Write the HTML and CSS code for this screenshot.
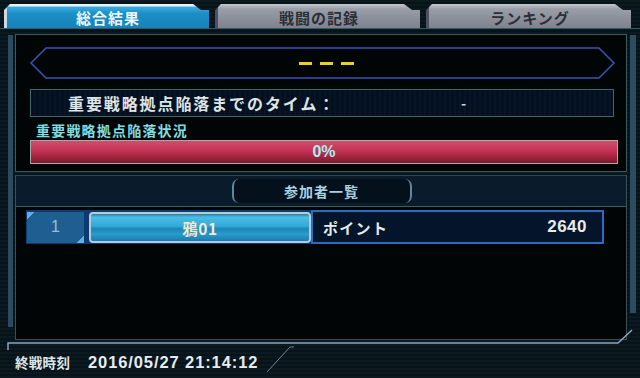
FILE: index.html
```html
<!DOCTYPE html>
<html lang="ja">
<head>
<meta charset="utf-8">
<link rel="stylesheet" href="styles.css">
</head>
<body>
<div class="screen">
  <div class="tabs">
    <div class="tab active"><span>総合結果</span></div>
    <div class="tab"><span>戦闘の記録</span></div>
    <div class="tab"><span>ランキング</span></div>
  </div>
  <div class="topline"></div>
  <div class="frame">
    <div class="rail left"><div class="bar"></div></div>
    <div class="content">
      <div class="panel upper">
        <div class="banner">
          <svg class="hex" viewBox="0 0 584 32" preserveAspectRatio="none"><polygon points="16,1 568,1 583,16 568,31 16,31 1,16" fill="none" stroke="#3556b8" stroke-width="1.5" vector-effect="non-scaling-stroke"/></svg>
          <div class="dashes"><i></i><i></i><i></i></div>
        </div>
        <div class="timerow">
          <span class="tlabel">重要戦略拠点陥落までのタイム：</span>
          <span class="tval">-</span>
        </div>
        <div class="statlabel">重要戦略拠点陥落状況</div>
        <div class="progress">0%</div>
      </div>
      <div class="panel lower">
        <div class="listhead">
          <div class="bracket">参加者一覧</div>
        </div>
        <div class="row">
          <div class="num">1</div>
          <div class="name"><span>鴉01</span></div>
          <div class="points">
            <span>ポイント</span>
            <span class="pv">2640</span>
          </div>
        </div>
      </div>
    </div>
    <div class="rail right"><div class="bar"></div></div>
  </div>
  <div class="footer">
    <svg class="fline" viewBox="0 0 640 30" preserveAspectRatio="none">
      <polyline points="8,10 8,3 618,3 632,-10" fill="none" stroke="#8fa4bf" stroke-width="1.5"/>
      <polyline points="267,32 290,7 294,7" fill="none" stroke="#6f8496" stroke-width="1"/>
    </svg>
    <span class="flabel">終戦時刻</span>
    <span class="ftime">2016/05/27 21:14:12</span>
  </div>
</div>
</body>
</html>
```
FILE: styles.css
```css
* { box-sizing: border-box; }
html, body { margin: 0; padding: 0; }
body {
  width: 640px; height: 378px; overflow: hidden;
  background: #08161c;
  font-family: "Noto Sans CJK JP", "Liberation Sans", sans-serif;
}
.screen {
  width: 640px; height: 378px;
  background: repeating-linear-gradient(to bottom, #0a1a20 0, #0a1a20 2px, #071319 2px, #071319 4px);
  display: flex; flex-direction: column;
}
.tabs {
  display: flex; gap: 6px; padding: 4px 0 0 4px; height: 28px;
}
.tab {
  width: 205px; height: 24px;
  background: linear-gradient(to bottom, #c4c8d0 0, #9a9ea8 20%, #7e828c 100%);
  clip-path: polygon(6px 0, 189px 0, 197px 6px, 205px 6px, 205px 24px, 0 24px, 0 6px);
  display: flex; align-items: center; justify-content: center;
  border-left: 3px solid #4c5060;
}
.tab span {
  font-size: 15px; font-weight: 700; color: #2b2f38; letter-spacing: 1px;
  margin-top: 2px;
}
.tab.active {
  background: linear-gradient(to bottom, #e8f4f8 0, #e8f4f8 2px, #3aaee0 3px, #1c8ec6 40%, #1682ba 100%);
  border-left: 3px solid #cfd8dc;
}
.tab.active span { color: #ecf6fb; }
.topline { height: 1px; background: #2f5b66; margin: 0 0 5px 0; }
.frame { display: flex; height: 306px; }
.rail { width: 15px; position: relative; }
.rail.left .bar {
  margin: 1px 0 0 8px; width: 5px; height: 292px; background: #2a4a60;
}
.rail.right { width: 13px; }
.rail.right .bar {
  margin: 1px 0 0 3px; width: 6px; height: 278px; background: #2c4c62;
}
.content { width: 612px; display: flex; flex-direction: column; gap: 3px; }
.panel.upper {
  height: 138px;
  border: 1px solid #3c5a5c;
  background: #020506;
  padding: 12px 10px 0 14px;
  display: flex; flex-direction: column;
}
.banner {
  position: relative; height: 32px; width: 585px;
  display: flex; align-items: center; justify-content: center;
}
.hex { position: absolute; inset: 0; width: 100%; height: 100%; }
.dashes { display: flex; gap: 8px; margin-left: 8px; }
.dashes i { display: block; width: 13px; height: 3px; background: #e6d12a; }
.timerow {
  margin-top: 10px; height: 28px; width: 584px;
  border: 1px solid #3d6a68;
  background: repeating-linear-gradient(to right, #04101e 0, #04101e 3px, #061428 3px, #061428 5px);
  display: flex; align-items: center; padding-left: 37px;
}
.tlabel { font-size: 16px; font-weight: 700; color: #dfe4e6; letter-spacing: 1.9px; width: 393px; }
.tval { font-size: 14px; font-weight: 700; color: #d0d4d6; }
.statlabel {
  margin-top: 5px; padding-left: 6px;
  font-size: 14px; font-weight: 700; color: #7fdde0; letter-spacing: 1.2px; line-height: 16px;
}
.progress {
  margin-top: 2px; height: 24px; width: 588px;
  border: 1px solid #a9aaa8;
  background: linear-gradient(to bottom, #d34c6c 0, #c23356 45%, #a6243f 70%, #7a1a30 100%);
  display: flex; align-items: center; justify-content: center;
  font-family: "Liberation Sans", sans-serif; font-weight: 700; font-size: 16px; color: #a8eef2;
}
.panel.lower {
  flex: 1;
  border-left: 1px solid #3c4f52; border-right: 1px solid #3c4f52; border-bottom: 1px solid #3c4a48;
  background: #020506;
  display: flex; flex-direction: column;
}
.listhead {
  height: 32px; background: #0a1c2b;
  border-top: 1px solid #2c4a54; border-bottom: 1px solid #3c5e62;
  display: flex; align-items: center; justify-content: center;
}
.bracket {
  width: 180px; height: 24px; margin-left: 1px;
  border-left: 2px solid #5a8a9c; border-right: 2px solid #5a8a9c;
  border-radius: 7px;
  background: #04111c;
  display: flex; align-items: center; justify-content: center;
  font-size: 14px; font-weight: 700; color: #a8d2e2; letter-spacing: 1px;
}
.row {
  margin: 3px 0 0 10px; display: flex; height: 34px; width: 578px;
  background: #0d3a70; align-items: center;
}
.num {
  width: 57px; height: 31px; margin-left: 1px;
  background: linear-gradient(135deg, #5fb0e0 0, #5fb0e0 5px, #1e5e90 5px, #1e5e90 calc(100% - 5px), #5fb0e0 calc(100% - 5px));
  display: flex; align-items: center; justify-content: center;
  font-family: "Liberation Sans", sans-serif; font-size: 16px; color: #94c0de;
}
.name {
  width: 222px; height: 31px; margin-left: 5px;
  border: 2px solid #b4ccd6; border-radius: 4px;
  background: linear-gradient(to bottom, #2c7fa8 0, #49bde4 12%, #33a9d8 45%, #1e85b8 55%, #2a9ccc 75%, #1a7aae 100%);
  display: flex; align-items: center; justify-content: center;
}
.name span { font-size: 15.5px; font-weight: 700; color: #f2ead0; margin-top: 1px; letter-spacing: 0.5px; }
.points {
  flex: 1; height: 34px;
  border: 2px solid #2a6cc4;
  background: #04142a;
  display: flex; align-items: center; justify-content: space-between;
  padding: 0 15px 0 10px;
  font-size: 15px; font-weight: 700; color: #e6ecee; letter-spacing: 1.3px;
}
.pv { font-family: "Liberation Sans", sans-serif; font-size: 17px; letter-spacing: 0.5px; }
.footer {
  position: relative; flex: 1;
  display: flex; align-items: center; padding: 6px 0 0 15px;
}
.fline { position: absolute; left: 0; top: 0; width: 640px; height: 30px; overflow: visible; }
.flabel { font-size: 13.5px; font-weight: 700; color: #dfe6ea; width: 73px; letter-spacing: 0.3px; }
.ftime { font-family: "Liberation Sans", sans-serif; font-weight: 700; font-size: 16.5px; color: #e6ecf0; letter-spacing: 0.9px; }
```
